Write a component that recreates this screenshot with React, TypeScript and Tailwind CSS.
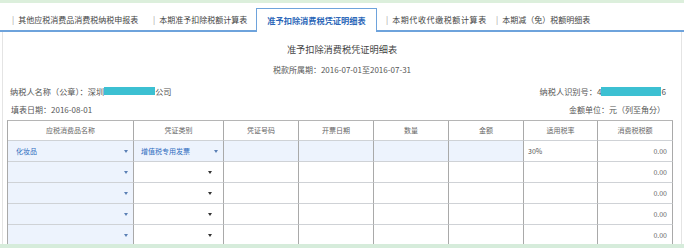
import React from "react";

const headers = ["应税消费品名称", "凭证类别", "凭证号码", "开票日期", "数量", "金额", "适用税率", "消费税税额"];

function Tri({ color }: { color: string }) {
  return (
    <svg width="4" height="3" viewBox="0 0 4 3" className="shrink-0">
      <path d="M0 0 L4 0 L2 3 Z" fill={color} />
    </svg>
  );
}

const cell = "border-r border-b border-r-[#a9a9a9] border-b-[#cfd2d6] h-[21px] flex items-center text-[7px]";

function Row({ first }: { first: boolean }) {
  const blue = "bg-[#edf3fd]";
  return (
    <>
      <div className={`${cell} ${blue} pl-[8px] pr-[5px] justify-between`}>
        <span className="text-[#2f6cc0]">{first ? "化妆品" : ""}</span>
        <Tri color="#5a7fb5" />
      </div>
      <div className={`${cell} ${first ? blue : "bg-white"} pl-[7px] ${first ? "pr-[5px]" : "pr-[11px]"} justify-between`}>
        <span className="text-[#2f6cc0]">{first ? "增值税专用发票" : ""}</span>
        <Tri color={first ? "#5a7fb5" : "#333"} />
      </div>
      <div className={`${cell} ${first ? blue : "bg-white"}`} />
      <div className={`${cell} ${first ? blue : "bg-white"}`} />
      <div className={`${cell} ${first ? blue : "bg-white"}`} />
      <div className={`${cell} ${first ? blue : "bg-white"}`} />
      <div className={`${cell} bg-white pl-[4px] text-[#555]`}>{first ? "30%" : ""}</div>
      <div className={`${cell} bg-white justify-end pr-[5px] text-[#666]`}>0.00</div>
    </>
  );
}

export default function App() {
  return (
    <div className="w-[684px] h-[248px] overflow-hidden bg-white flex flex-col font-['Noto_Sans_CJK_SC',sans-serif] text-[#555]">
      <div className="h-[3px] bg-[#dcefdc] shrink-0" />
      {/* tab bar */}
      <div className="h-[29px] shrink-0 border-b-2 border-[#6ea3dc] flex items-end pl-[12px] text-[8px] text-[#444]">
        <div className="w-[141px] h-[23px] flex items-center gap-[4px] pt-[2px]">
          <span className="text-[#999]">|</span>
          <span>其他应税消费品消费税纳税申报表</span>
        </div>
        <div className="w-[103px] h-[23px] flex items-center gap-[4px] pt-[2px]">
          <span className="text-[#999]">|</span>
          <span>本期准予扣除税额计算表</span>
        </div>
        <div className="w-[121px] h-[24px] -mb-[2px] bg-white border-x border-t border-[#6ea3dc] flex items-center justify-center font-bold text-[#2c67b8] text-[8.2px] relative z-10">
          准予扣除消费税凭证明细表
        </div>
        <div className="ml-[9px] w-[110px] h-[23px] flex items-center gap-[4px] pt-[2px]">
          <span className="text-[#999]">|</span>
          <span className="tracking-[0.6px]">本期代收代缴税额计算表</span>
        </div>
        <div className="h-[23px] flex items-center gap-[4px] pt-[2px]">
          <span className="text-[#999]">|</span>
          <span>本期减（免）税额明细表</span>
        </div>
      </div>
      {/* content */}
      <div className="flex-1 min-h-0 overflow-hidden mx-[2px] border-x border-[#e4e4e4] flex flex-col">
        <div className="mt-[11px] h-[12px] leading-[12px] text-center text-[9.2px] text-[#444]">准予扣除消费税凭证明细表</div>
        <div className="mt-[9px] h-[12px] leading-[12px] text-center text-[8px]">税款所属期：2016-07-01至2016-07-31</div>
        <div className="mt-[9px] h-[12px] leading-[12px] flex justify-between pl-[7px] pr-[15px] text-[8.2px]">
          <div className="flex items-center">
            <span>纳税人名称（公章）：深圳</span>
            <span className="inline-block w-[51px] h-[8px] bg-[#3cc0d2]" />
            <span>公司</span>
          </div>
          <div className="flex items-center">
            <span>纳税人识别号：4</span>
            <span className="inline-block w-[60px] h-[9px] bg-[#3cc0d2]" />
            <span>6</span>
          </div>
        </div>
        <div className="mt-[7px] h-[12px] leading-[12px] flex justify-between pl-[8px] pr-[16px] text-[8px]">
          <span>填表日期：2016-08-01</span>
          <span>金额单位：元（列至角分）</span>
        </div>
        <div className="mt-[4px] ml-[4px] w-[666px] grid grid-cols-[126px_90px_75px_75px_75px_75px_74px_75px] border-l border-t border-l-[#a9a9a9] border-t-[#b5b5b5]">
          {headers.map((h) => (
            <div key={h} className="h-[20px] border-r border-b border-r-[#a9a9a9] border-b-[#cfd2d6] flex items-center justify-center text-[7px] text-[#666]">
              {h}
            </div>
          ))}
          <Row first={true} />
          <Row first={false} />
          <Row first={false} />
          <Row first={false} />
          <Row first={false} />
        </div>
      </div>
      <div className="h-[4px] bg-[#d6ecdb] shrink-0" />
    </div>
  );
}
